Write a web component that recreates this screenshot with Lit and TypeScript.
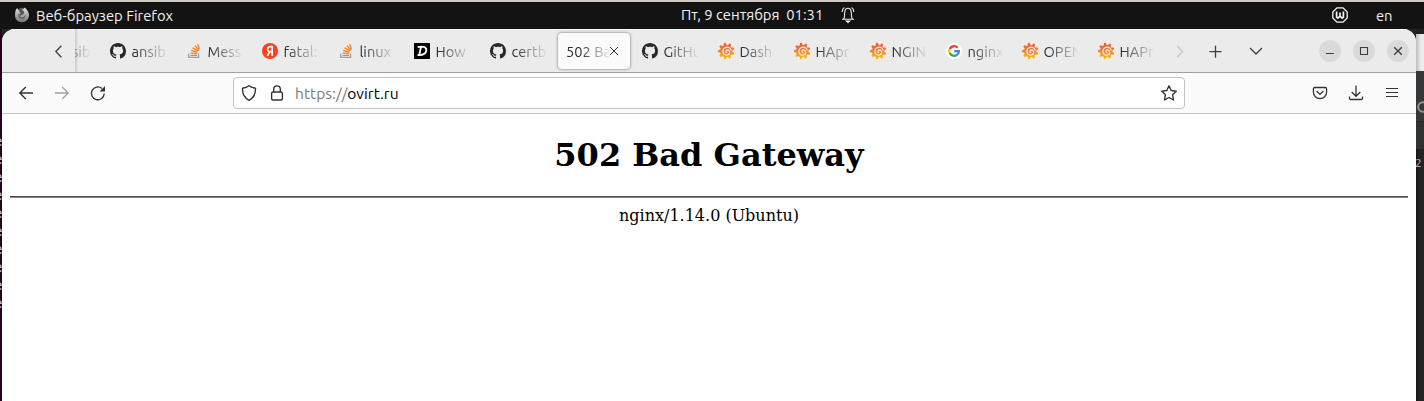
import { LitElement, html, css, svg } from "lit";
import { customElement, property } from "lit/decorators.js";

const grafanaGear = (() => {
  const points: string[] = [];
  const teeth = 9;
  for (let i = 0; i < teeth; i++) {
    const a = (i / teeth) * Math.PI * 2 - 0.35;
    for (const [d, r] of [[-0.25, 6.2], [-0.1, 8.3], [0.1, 8.3], [0.25, 6.2]]) {
      points.push(`${(8.2 + Math.cos(a + d) * r).toFixed(2)},${(8.1 + Math.sin(a + d) * r).toFixed(2)}`);
    }
  }
  return points.join(" ");
})();

const favicons: Record<string, unknown> = {
  github: svg`<path fill="#24292f" d="M8 0C3.58 0 0 3.58 0 8c0 3.54 2.29 6.53 5.47 7.59.4.07.55-.17.55-.38 0-.19-.01-.82-.01-1.49-2.01.37-2.53-.49-2.69-.94-.09-.23-.48-.94-.82-1.13-.28-.15-.68-.52-.01-.53.63-.01 1.08.58 1.23.82.72 1.21 1.87.87 2.33.66.07-.52.28-.87.51-1.07-1.78-.2-3.64-.89-3.64-3.95 0-.87.31-1.59.82-2.15-.08-.2-.36-1.02.08-2.12 0 0 .67-.21 2.2.82.64-.18 1.32-.27 2-.27s1.36.09 2 .27c1.53-1.04 2.2-.82 2.2-.82.44 1.1.16 1.92.08 2.12.51.56.82 1.27.82 2.15 0 3.07-1.87 3.75-3.65 3.95.29.25.54.73.54 1.48 0 1.07-.01 1.93-.01 2.2 0 .21.15.46.55.38A8.01 8.01 0 0 0 16 8c0-4.42-3.58-8-8-8z"/>`,
  stack: svg`<g fill="none" transform="translate(2 0)"><path stroke="#9aa0a6" stroke-width="1.2" d="M.7 10.400v4h10v-4"/><path stroke="#f48024" stroke-width="1.300" d="M2.600 12.300h6.400M2.700 9.900l6.400.8M3.200 7.300l6.200 1.900M4.500 4.700l5.500 3.200M7 2.600l4 4.700M9.800 1.300l1.600 4.900"/></g>`,
  yandex: svg`<circle cx="8" cy="8" r="8" fill="#fc3f1d"/><path fill="none" stroke="#fff" stroke-width="1.7" d="M10.2 13V3.6H8.400c-3.700 0-3.600 5.100-.2 5.100h2M8 8.400 5.300 13"/>`,
  digital: svg`<rect width="16" height="16" rx=".6"/><path fill="none" stroke="#fff" stroke-width="1.8" d="M6.900 4.200 5.300 12M3.600 4.200c4.200-1 8.800-.6 8.800 2.800 0 3.600-4.200 5.800-8.900 4.800"/>`,
  grafana: svg`<defs><linearGradient id="g" x1="0" y1="0" x2="0" y2="1"><stop offset="0" stop-color="#f05a28"/><stop offset=".5" stop-color="#f57f30"/><stop offset="1" stop-color="#fbca0a"/></linearGradient></defs><polygon points=${grafanaGear} fill="url(#g)"/><path fill="none" stroke="#ebebeb" stroke-width="1.3" stroke-linecap="round" d="M13.200 7C12.200 4.400 9.200 3.400 6.900 4.700 4.600 6 4.300 9.100 5.900 10.900c1.800 1.900 5 1.400 5.700-.9.500-2-1.300-3.600-2.900-2.800-1 .6-1 1.900 0 2.200"/>`,
  google: svg`<circle cx="8" cy="8" r="8" fill="#fff"/><g fill="none" stroke-width="2.300"><path stroke="#ea4335" d="M3.700 5.900A4.800 4.800 0 0 1 11.600 4.800"/><path stroke="#fbbc05" d="M3.700 10.100a4.800 4.800 0 0 1 0-4.200"/><path stroke="#34a853" d="M11.200 11.600a4.800 4.800 0 0 1-7.500-1.500"/><path stroke="#4285f4" d="M8.200 8.100h4.700c0 1.500-.5 2.700-1.700 3.500"/></g>`,
};

@customElement("browser-tab")
class BrowserTab extends LitElement {
  @property() icon = "";
  @property() label = "";
  @property({ type: Boolean, reflect: true }) active = false;

  static styles = css`
    :host { display: block; flex: 0 0 76px; width: 76px; min-width: 0; height: 43px; box-sizing: border-box; padding: 4px 2px 3px; }
    .tab { height: 36px; display: flex; align-items: center; padding: 0 8px; box-sizing: border-box; border-radius: 4px; }
    .icon { width: 16px; height: 16px; flex: none; margin-right: 5.5px; overflow: visible; stroke: none; }
    .label { flex: 1; min-width: 0; overflow: hidden; white-space: nowrap; font-size: 14.67px; line-height: 20px; color: #2c2c2c;
      padding-top: 2px; mask-image: linear-gradient(to right, #000 3px, transparent 36px); }
    :host([active]) .tab { background: #fbfbfb; box-shadow: 0 0 3px rgba(0, 0, 0, 0.55); }
    :host([active]) .label { mask-image: linear-gradient(to right, #000 14px, transparent 46px); }
    .close { width: 10px; height: 10px; flex: none; margin: 0 3px 0 0; stroke: #333; fill: none; stroke-width: 1; }
  `;

  render() {
    return html`<div class="tab">
      ${this.icon ? html`<svg class="icon" viewBox="0 0 16 16">${favicons[this.icon]}</svg>` : ""}
      <span class="label">${this.label}</span>
      ${this.active ? html`<svg class="close" viewBox="0 0 10 10"><path d="m1 1 8 8M9 1 1 9"/></svg>` : ""}
    </div>`;
  }
}

const tabs: [string, string][] = [
  ["github", "ansib"], ["stack", "Mess"], ["yandex", "fatal:"], ["stack", "linux"],
  ["digital", "How"], ["github", "certb"], ["", "502 Ba"], ["github", "GitHu"],
  ["grafana", "Dash"], ["grafana", "HApr"], ["grafana", "NGIN"], ["google", "nginx"],
  ["grafana", "OPEN"], ["grafana", "HAPr"],
];

@customElement("app-root")
class AppRoot extends LitElement {
  static styles = css`
    :host { display: block; position: relative; width: 1424px; height: 401px; overflow: hidden; background: #242424; font-family: "Ubuntu", "Noto Sans", sans-serif; }
    svg { display: block; fill: none; overflow: visible; }
    .panel { height: 29px; box-sizing: border-box; border-top: 2px solid #cecbc8; background: #131313; color: #f2f2f2; display: grid; grid-template-columns: 681px 1fr 200px; font-size: 14.8px; line-height: 27px; white-space: nowrap; }
    .appname { display: flex; padding-left: 14px; gap: 6px; }
    .appname svg { margin-top: 5px; }
    .clock { display: flex; gap: 18px; white-space: pre; line-height: 26px; }
    .clock svg { margin-top: 4px; flex: none; }
    .status { display: flex; justify-content: flex-end; gap: 28px; padding-right: 31.5px; }
    .status svg { margin-top: 5px; }
    .desktop { display: grid; grid-template-columns: 2px 1414px 8px; height: 372px; }
    .terminal { background: #26031d; color: #c8c4bc; overflow: hidden; font: 14px/18px "DejaVu Sans Mono", monospace; padding-top: 103px; }
    .terminal div { margin-left: -6px; width: 9px; }
    .behind { overflow: hidden; background: #242424; display: flex; flex-direction: column; box-shadow: inset 3px 0 3px -2px #111; }
    .b1 { height: 5px; background: #202020; }
    .b2 { height: 37px; background: linear-gradient(to right, #bdbdbd, #ececec 5px); }
    .b3 { height: 51px; box-sizing: border-box; background: #363738; border-bottom: 1px solid #292929; padding-top: 29px; overflow: hidden; }
    .b3 svg { margin-left: 1px; }
    .b4 { height: 27px; background: #303132; }
    .b5 { color: #aaa; font: 11px/28px "Noto Sans", sans-serif; margin-left: -1px; }
    .window { background: #fff; border-radius: 13px 13px 0 0; overflow: hidden; display: flex; flex-direction: column; }
    .strip { flex: none; height: 44px; box-sizing: border-box; border-bottom: 1px solid #a0a0a0; background: #ebebeb; box-shadow: inset 0 1px #fafafa; display: flex; stroke: #3d3d3d; }
    .back { width: 73px; flex: none; box-sizing: border-box; padding: 16px 0 0 52px; }
    .cut { width: 25px; flex: none; box-sizing: border-box; overflow: hidden; font-size: 14.67px; line-height: 20px; padding: 13px 0 0; color: #777; box-shadow: inset 4px 0 2px -2px #cfcfcf; }
    .cut span { display: block; margin-left: -3px; mask-image: linear-gradient(to right, #000, transparent 19px); }
    .tail { display: flex; padding: 16px 0 0 11px; }
    .tail .plus { margin-left: 24px; }
    .tail .down { margin-left: 27px; }
    .controls { margin-left: auto; padding: 11px 7px 0 0; display: flex; gap: 12px; }
    .controls svg { background: #dadada; border-radius: 50%; }
    .toolbar { flex: none; height: 41px; box-sizing: border-box; background: #fbfbfb; border-bottom: 1px solid #c6c6c6; display: flex; align-items: center; stroke: #333; }
    .nav { width: 231px; box-sizing: border-box; padding-left: 16px; display: flex; gap: 20px; }
    .off { opacity: 0.45; }
    .url { width: 952px; height: 32px; box-sizing: border-box; border: 1px solid #c2c2c2; border-radius: 4px; background: #fff; display: flex; align-items: center; padding: 0 7px; }
    .url .lock { margin-left: 12px; }
    .url .star { margin-left: auto; }
    .address { margin-left: 10px; font-size: 15.6px; line-height: 20px; color: #7a7a7a; padding-bottom: 1px; }
    .address b { font-weight: 400; color: #000; }
    .actions { margin-left: auto; padding-right: 16px; display: flex; gap: 20px; }
    .page { padding: 0 8px; text-align: center; color: #000; font-family: "DejaVu Serif", serif; }
    h1 { font-size: 32px; line-height: 38px; margin: 22px 0; }
    hr { border: 0; height: 2px; background: linear-gradient(#4c4c4c 50%, #858585 50%); margin: 0; }
    .server { font-size: 16px; line-height: 19px; padding-top: 8px; }
  `;

  render() {
    return html`
      <header class="panel">
        <div class="appname">
          <svg width="16" height="16" viewBox="0 0 16 16"><defs><linearGradient id="fx" x1="0" y1="0" x2="0" y2="1"><stop stop-color="#e4e4e4"/><stop offset="1" stop-color="#747474"/></linearGradient></defs><path fill="url(#fx)" d="M1.800 3.100 3.100 1l1.700 2.200L6 2.800 8.400 1l.5 1L11 .5c.6 1.400 3.800 3.200 4 7.500.3 4-3.100 7.200-7 7.200C3.700 15.200.9 12 1 8.200c0-1.900.3-3.400.8-5.100Z"/><path fill="#585858" d="M5.500 1 9.700.8 8.300 2.800 9.800 4.300c.8 1 .4 2.400-.6 3L7 8.400l-2.500.2L7 10.300c2 .6 4.500-.8 4.300-3.400.8 3-1.200 5-3.600 4.900C5.500 11.700 4 10 4.200 7.600L6.800 6.400 5.200 4.600Z"/></svg>
          <span>Веб-браузер Firefox</span>
        </div>
        <div class="clock"><span>Пт, 9 сентября  01:31</span>
          <svg width="14" height="17" viewBox="0 0 14 17" stroke="#eee" stroke-width="1.100"><path d="M1 13.300h12M2.700 13c1-1.400.8-3.500 1-6.500.2-3 1.300-4.300 3.300-4.300s3.100 1.300 3.300 4.300c.2 3 0 5.100 1 6.500M3.400 1.400C1.800 2.300 1.200 4 1.200 6M10.600 1.400c1.600.9 2.200 2.600 2.200 4.600"/><path d="M5.300 15h3.400L7 16.500Z" fill="#eee"/></svg></div>
        <div class="status">
          <svg width="16" height="16" viewBox="0 0 16 16" stroke="#f4f4f4"><path stroke-width="1.300" d="M5 .8h6L15.200 5v6L11 15.200H5L.8 11V5Z"/><path stroke-width="1.700" d="M4.600 4.500v5.700l1.200 1 2.200-2 2.200 2 1.200-1V4.500M8 5.500v3.600"/></svg>
          <span>en</span>
        </div>
      </header>
      <div class="desktop">
        <div class="terminal">${Array.from({ length: 10 }, () => html`<div>e</div>`)}</div>
        <main class="window">
          <div class="strip">
            <div class="back"><svg width="10" height="13" viewBox="0 0 10 13"><path stroke-width="1.300" d="M7.400.8 1.800 6.500l5.600 5.700"/></svg></div>
            <div class="cut"><span>sib</span></div>
            ${tabs.map(([icon, label]) => html`<browser-tab .icon=${icon} .label=${label} .active=${!icon}></browser-tab>`)}
            <div class="tail">
              <svg width="10" height="13" viewBox="0 0 10 13" stroke="#c2c2c2"><path stroke-width="1.200" d="m2.200.8 5.400 5.700-5.400 5.700"/></svg>
              <svg class="plus" width="13" height="13" viewBox="0 0 13 13"><path stroke-width="1.300" d="M6.500.7v12M.5 6.700h12"/></svg>
              <svg class="down" width="14" height="13" viewBox="0 0 14 13"><path stroke-width="1.300" d="m1 3 6 6 6-6"/></svg>
            </div>
            <div class="controls">
              <svg width="22" height="22" viewBox="0 0 22 22"><path stroke-width="1.200" d="M7 13.500h8"/></svg>
              <svg width="22" height="22" viewBox="0 0 22 22"><path stroke-width="1.100" d="M7.500 7.500h7v7h-7z"/></svg>
              <svg width="22" height="22" viewBox="0 0 22 22"><path stroke-width="1.400" d="m7.200 7.200 7.600 7.600m0-7.600-7.600 7.600"/></svg>
            </div>
          </div>
          <div class="toolbar">
            <div class="nav">
              <svg width="16" height="16" viewBox="0 0 16 16"><path stroke-width="1.400" d="M15 8H1.800m6-6-6 6 6 6"/></svg>
              <svg class="off" width="16" height="16" viewBox="0 0 16 16"><path stroke-width="1.300" d="M1 8h13.200m-6-6 6 6-6 6"/></svg>
              <svg width="16" height="16" viewBox="0 0 16 16"><path stroke-width="1.300" d="M14.200 8.500A6.400 6.400 0 1 1 12 3.500"/><path fill="#333" stroke="none" d="M15 1v5.500H9.600Z"/></svg>
            </div>
            <div class="url">
              <svg width="16" height="16" viewBox="0 0 16 16"><path stroke-width="1.400" stroke-linejoin="round" d="M8 .8c2 1.600 4 2.300 6.500 2.500.2 5.400-1.400 9.500-6.500 12C2.900 12.800 1.300 8.700 1.500 3.300 4 3.100 6 2.400 8 .8Z"/></svg>
              <svg class="lock" width="16" height="16" viewBox="0 0 16 16"><rect x="2.600" y="7" width="10.800" height="8" rx="1.500" stroke-width="1.400"/><path stroke-width="1.400" d="M4.700 7V4.200a3.300 3.300 0 0 1 6.600 0V7"/></svg>
              <span class="address">https://<b>ovirt.ru</b></span>
              <svg class="star" width="16" height="16" viewBox="0 0 16 16"><path stroke-width="1.400" stroke-linejoin="round" d="m8 .8 2.200 4.700 5.100.7-3.700 3.600.9 5.200L8 12.500 3.500 15l.9-5.200L.7 6.200l5.100-.7Z"/></svg>
            </div>
            <div class="actions">
              <svg width="16" height="16" viewBox="0 0 16 16"><path stroke-width="1.300" d="M2.800 2.500h10.400q1.400 0 1.400 1.400V7a6.600 6.600 0 0 1-13.200 0V3.900q0-1.400 1.400-1.400Z"/><path stroke-width="1.300" d="m4.500 6 3.500 3.400L11.500 6"/></svg>
              <svg width="16" height="16" viewBox="0 0 16 16"><path stroke-width="1.300" d="M8 .5v10.800M3.700 7 8 11.300 12.300 7M1.500 11.500v1.800q0 1.200 1.200 1.200h10.600q1.200 0 1.200-1.200v-1.800"/></svg>
              <svg width="16" height="16" viewBox="0 0 16 16"><path stroke-width="1.200" d="M2 3.500h12M2 7.500h12M2 11.500h12"/></svg>
            </div>
          </div>
          <section class="page">
            <h1>502 Bad Gateway</h1>
            <hr />
            <div class="server">nginx/1.14.0 (Ubuntu)</div>
          </section>
        </main>
        <aside class="behind">
          <div class="b1"></div><div class="b2"></div>
          <div class="b3"><svg width="12" height="14" viewBox="0 0 12 14"><circle cx="6" cy="7" r="4.800" stroke="#929292" stroke-width="2"/></svg></div>
          <div class="b4"></div><div class="b5">2</div>
        </aside>
      </div>`;
  }
}
